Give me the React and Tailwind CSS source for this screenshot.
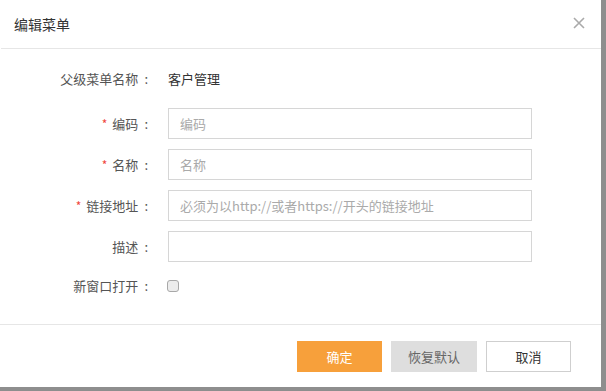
import React from 'react';

const font = { fontFamily: '"Noto Sans CJK SC", "Noto Sans", sans-serif' };

const Field = ({ label, required, children }) => (
  <div className="flex items-center h-[31px]">
    <div className="w-[150px] pr-[2px] text-right text-[13px] text-[#555] whitespace-nowrap">
      {required && <span className="text-[#f0463c] mr-[5px] text-[12px]">*</span>}
      {label}
      <span className="ml-[6px]">:</span>
    </div>
    <div className="ml-[18px] flex items-center">{children}</div>
  </div>
);

const TextInput = ({ placeholder }) => (
  <input
    type="text"
    placeholder={placeholder}
    className="w-[364px] h-[31px] border border-[#d6d6d6] px-[11px] text-[13px] text-[#333] placeholder:text-[#aaa] outline-none bg-white"
  />
);

export default function App() {
  return (
    <div className="w-[606px] h-[391px] bg-[#8e8e8e] overflow-hidden" style={font}>
      <div className="w-[601px] h-[387px] bg-white flex flex-col">
        {/* header */}
        <div className="h-[49px] flex items-center justify-between pl-[13px] pr-[16px] border-b border-[#e6e6e6] ml-[1px]">
          <span className="text-[14px] text-[#333]">编辑菜单</span>
          <svg width="12" height="12" viewBox="0 0 12 12" className="text-[#aaa] -mt-[2px]">
            <path d="M1 1L11 11M11 1L1 11" stroke="currentColor" strokeWidth="1.6" />
          </svg>
        </div>

        {/* body */}
        <div className="flex-1 pt-[14px] border-b border-[#e6e6e6]">
          <Field label="父级菜单名称">
            <span className="text-[13px] text-[#333]">客户管理</span>
          </Field>
          <div className="mt-[14px] flex flex-col gap-[10px]">
            <Field label="编码" required>
              <TextInput placeholder="编码" />
            </Field>
            <Field label="名称" required>
              <TextInput placeholder="名称" />
            </Field>
            <Field label="链接地址" required>
              <TextInput placeholder="必须为以http://或者https://开头的链接地址" />
            </Field>
            <Field label="描述">
              <TextInput placeholder="" />
            </Field>
          </div>
          <div className="mt-[8px]">
            <Field label="新窗口打开">
              <span className="w-[12px] h-[12px] rounded-[3px] border border-[#a8a8a8] bg-[#ececec] -ml-[1px]" />
            </Field>
          </div>
        </div>

        {/* footer */}
        <div className="h-[62px] flex items-start justify-end gap-[9px] pt-[16px] pr-[30px]">
          <button className="w-[85px] h-[31px] bg-[#f7a03b] text-white text-[13px]">确定</button>
          <button className="w-[86px] h-[31px] bg-[#dedede] text-[#666] text-[13px]">恢复默认</button>
          <button className="w-[85px] h-[31px] bg-white border border-[#cfcfcf] text-[#333] text-[13px]">取消</button>
        </div>
      </div>
    </div>
  );
}
